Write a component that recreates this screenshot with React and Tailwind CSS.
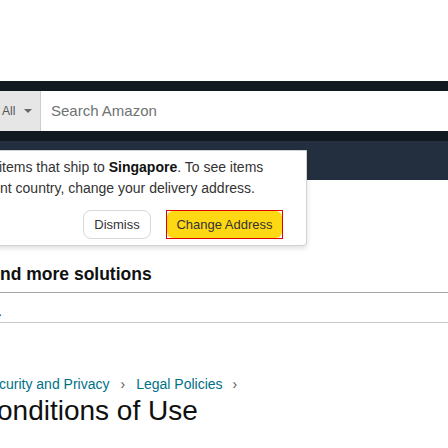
import React from 'react';

// --- Popover lokasi pengiriman ---
const DeliveryPopover = () => {
    return (
        <div className="absolute left-[-12px] top-[9px] w-[319px] bg-white border border-[#cfd3d3] rounded-br-[4px] shadow-[0_2px_5px_rgba(15,17,17,0.15)] pt-[6px] pb-[6px] z-10">
            <div className="pl-[11px] text-[14px] leading-[21px] text-[#333] whitespace-nowrap">
                <div className="ml-[-1px]">
                    items that ship to <span className="font-bold text-[#111]">Singapore</span>. To see items
                </div>
                <div>nt country, change your delivery address.</div>
            </div>
            <div className="flex justify-end gap-[15px] pr-[23px] mt-[11px]">
                <button className="w-[68px] h-[29px] bg-white border border-[#d5d9d9] rounded-[8px] text-[13px] text-[#333]">
                    Dismiss
                </button>
                <div className="border border-[#e00000]">
                    <button className="w-[115px] h-[27px] bg-[#ffd814] rounded-[6px] text-[13px] text-[#333]">
                        Change Address
                    </button>
                </div>
            </div>
        </div>
    );
};

export default function App() {
    return (
        <div className="w-[448px] h-[448px] overflow-hidden bg-white font-['Liberation_Sans',Arial,sans-serif]">
            <div className="h-[81px]" />

            {/* --- Header --- */}
            <div className="bg-[#131921] py-[10px]">
                <div className="flex h-[40px] bg-white">
                    <div className="w-[41px] bg-[#e6e6e6] border-r border-[#cdcdcd] flex items-center pl-[2px] gap-[9px]">
                        <span className="text-[12px] text-[#555]">All</span>
                        <svg width="8" height="5" viewBox="0 0 8 5">
                            <path d="M0 0 L8 0 L4 4 Z" fill="#666" />
                        </svg>
                    </div>
                    <div className="flex items-center pl-[10px] text-[15px] text-[#6f7373]">Search Amazon</div>
                </div>
            </div>
            <div className="h-[39px] bg-[#232f3e] relative">
                <DeliveryPopover />
            </div>

            {/* --- Konten --- */}
            <div className="pt-[82px] text-[#0f1111]">
                <h2 className="text-[17.5px] leading-[24px] font-bold whitespace-nowrap">nd more solutions</h2>
                <div className="mt-[6px] border-t border-[#a6a6a6]" />
                <div className="text-[14px] leading-[20px] mt-[8px] ml-[-2px]">.</div>
                <div className="mt-[1px] border-t border-[#c8c8c8]" />
                <div className="mt-[51px] flex items-center text-[14px] leading-[20px] whitespace-nowrap">
                    <span className="text-[#007185] ml-[-1px]">curity and Privacy</span>
                    <span className="mx-[11px] text-[#565959]">›</span>
                    <span className="text-[#007185]">Legal Policies</span>
                    <span className="ml-[10px] text-[#565959]">›</span>
                </div>
                <h1 className="text-[28px] leading-[34px] whitespace-nowrap ml-[-3px]">onditions of Use</h1>
            </div>
        </div>
    );
}
